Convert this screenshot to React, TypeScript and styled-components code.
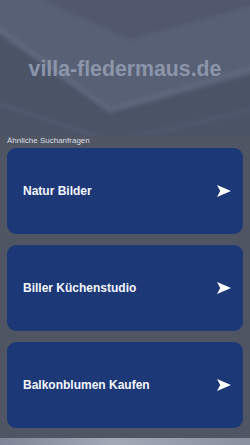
import React from "react";
import styled, { createGlobalStyle } from "styled-components";

const searches = ["Natur Bilder", "Biller Küchenstudio", "Balkonblumen Kaufen"];

const GlobalStyle = createGlobalStyle`
  html, body {
    margin: 0;
    padding: 0;
    background: #4f5563;
    font-family: "Liberation Sans", Arial, sans-serif;
  }
`;

const Page = styled.div`
  width: 250px;
  min-height: 445px;
  display: flex;
  flex-direction: column;
  background: #4f5563;
  overflow: hidden;
`;

const Header = styled.header`
  position: relative;
  height: 136px;
  display: flex;
  align-items: center;
  justify-content: center;
  background: #535a6e;
  overflow: hidden;
`;

const Backdrop = styled.svg`
  position: absolute;
  inset: 0;
  width: 100%;
  height: 100%;
`;

const SiteTitle = styled.h1`
  position: relative;
  margin: 2px 0 0;
  font-size: 21.3px;
  font-weight: bold;
  color: #8c95a9;
`;

const Section = styled.section`
  display: flex;
  flex-direction: column;
  padding: 0 7px 10px;
`;

const Label = styled.div`
  font-size: 8px;
  line-height: 9px;
  color: #dcdfe6;
  padding: 0 0 3px;
`;

const CardList = styled.div`
  display: flex;
  flex-direction: column;
  gap: 11px;
`;

const Card = styled.a`
  height: 86px;
  display: flex;
  align-items: center;
  justify-content: space-between;
  padding: 0 12px 0 16px;
  border-radius: 9px;
  background: #1d3877;
  color: #f4f6fb;
  text-decoration: none;
  font-size: 12px;
  font-weight: bold;
`;

const Footer = styled.div`
  height: 8px;
  background: linear-gradient(90deg, #7e8596 0%, #a2a8b6 45%, #8a909f 100%);
`;

const Arrow = () => (
  <svg width="14" height="12" viewBox="0 0 14 12">
    <path d="M0 0 L14 6 L0 12 L3.2 6 Z" fill="#ffffff" />
  </svg>
);

const App = () => {
  return (
    <Page>
      <GlobalStyle />
      <Header>
        <Backdrop viewBox="0 0 250 136" preserveAspectRatio="none">
          <defs>
            <filter id="soft" x="-10%" y="-10%" width="120%" height="120%">
              <feGaussianBlur stdDeviation="2" />
            </filter>
          </defs>
          <g filter="url(#soft)">
            <polygon points="-10,-10 260,-10 260,72 110,113 -10,28" fill="#596074" />
            <polygon points="20,-10 130,40 260,4 260,-10" fill="#51586d" />
            <polygon points="-10,28 110,113 260,72 260,146 -10,146" fill="#4c5366" />
            <polyline points="-10,22 110,110 260,66" fill="none" stroke="#646c84" strokeWidth="3" />
            <polyline points="-10,100 112,142 260,108" fill="none" stroke="#596176" strokeWidth="2" />
          </g>
        </Backdrop>
        <SiteTitle>villa-fledermaus.de</SiteTitle>
      </Header>
      <Section>
        <Label>Ähnliche Suchanfragen</Label>
        <CardList>
          {searches.map((s) => (
            <Card key={s} href="#">
              <span>{s}</span>
              <Arrow />
            </Card>
          ))}
        </CardList>
      </Section>
      <Footer />
    </Page>
  );
};

export default App;
